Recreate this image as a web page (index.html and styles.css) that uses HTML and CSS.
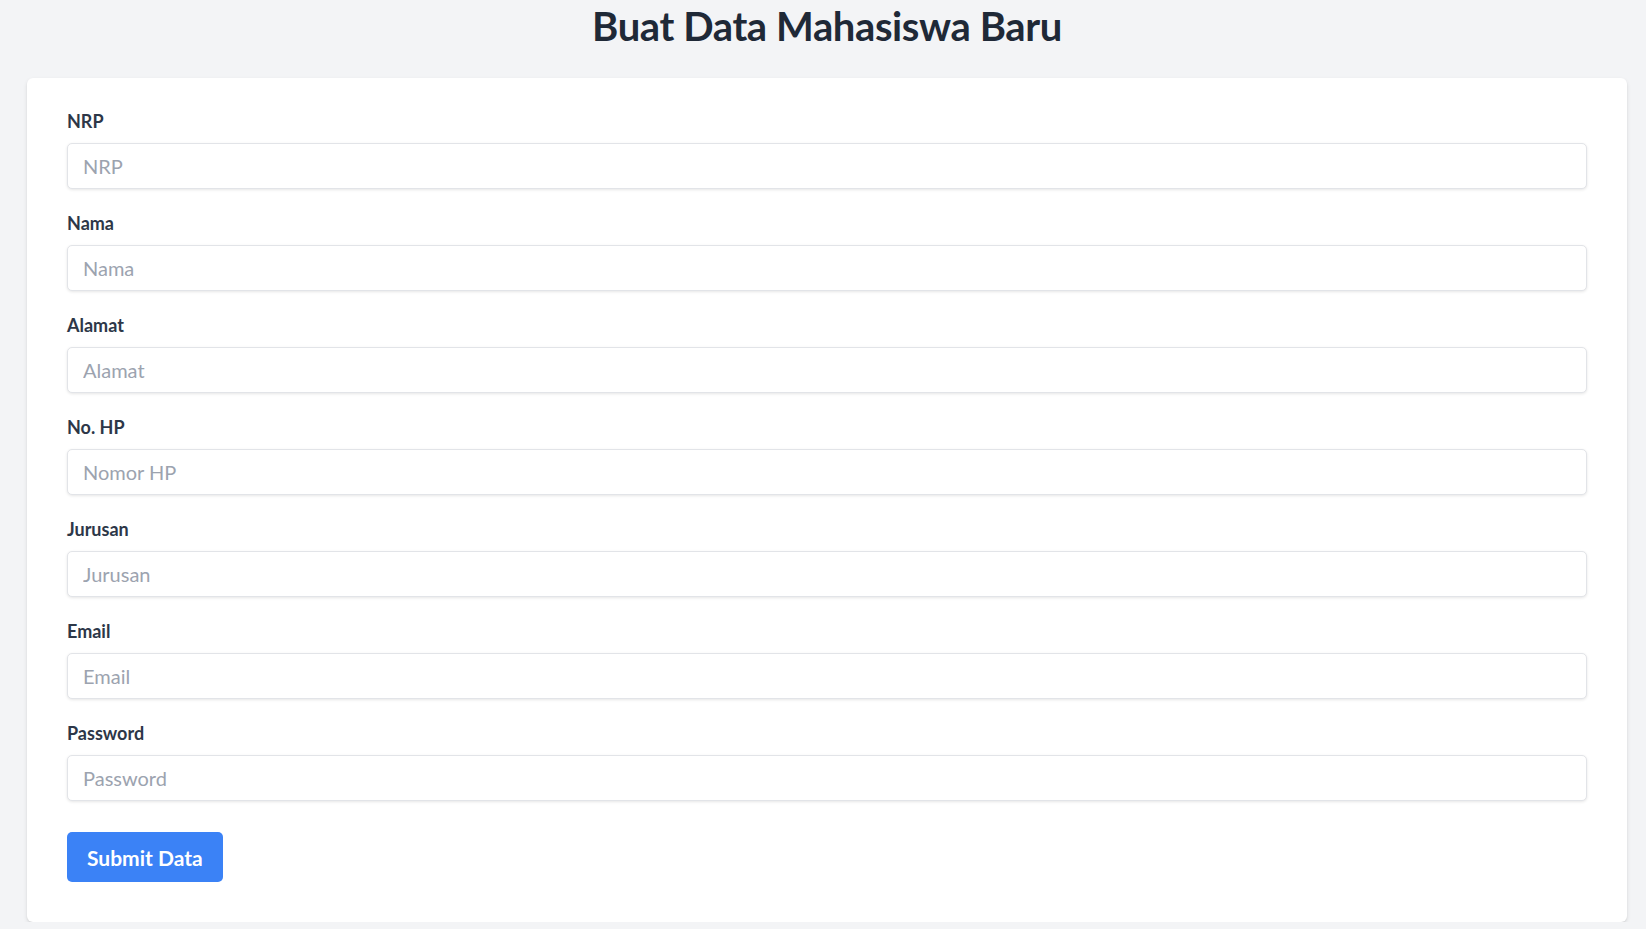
FILE: index.html
```html
<!DOCTYPE html>
<html lang="id">
<head>
<meta charset="utf-8">
<title>Buat Data Mahasiswa Baru</title>
<link rel="stylesheet" href="styles.css">
</head>
<body>
<main class="page">
  <h1 class="title">Buat Data Mahasiswa Baru</h1>
  <form class="card">
    <div class="field">
      <label class="label" for="nrp">NRP</label>
      <input class="input" id="nrp" type="text" placeholder="NRP">
    </div>
    <div class="field">
      <label class="label" for="nama">Nama</label>
      <input class="input" id="nama" type="text" placeholder="Nama">
    </div>
    <div class="field">
      <label class="label" for="alamat">Alamat</label>
      <input class="input" id="alamat" type="text" placeholder="Alamat">
    </div>
    <div class="field">
      <label class="label" for="hp">No. HP</label>
      <input class="input" id="hp" type="text" placeholder="Nomor HP">
    </div>
    <div class="field">
      <label class="label" for="jurusan">Jurusan</label>
      <input class="input" id="jurusan" type="text" placeholder="Jurusan">
    </div>
    <div class="field">
      <label class="label" for="email">Email</label>
      <input class="input" id="email" type="email" placeholder="Email">
    </div>
    <div class="field">
      <label class="label" for="password">Password</label>
      <input class="input" id="password" type="password" placeholder="Password">
    </div>
    <div class="actions">
      <button class="button" type="submit">Submit Data</button>
    </div>
  </form>
</main>
</body>
</html>
```

FILE: styles.css
```css
* {
  box-sizing: border-box;
}

html, body {
  margin: 0;
  padding: 0;
}

body {
  background: #f3f4f6;
  font-family: Lato, "Noto Sans", sans-serif;
  color: #1f2937;
}

.page {
  width: 1600px;
  margin-left: 27px;
  padding-top: 2px;
}

.title {
  margin: 0;
  font-size: 40px;
  line-height: 48px;
  font-weight: 700;
  letter-spacing: -0.4px;
  text-align: center;
  color: #1f2937;
}

.card {
  margin-top: 28px;
  background: #ffffff;
  border-radius: 6px;
  box-shadow: 0 2px 4px rgba(0, 0, 0, 0.1), 0 1px 2px rgba(0, 0, 0, 0.06);
  padding: 30px 40px 40px 40px;
  display: flex;
  flex-direction: column;
  gap: 21px;
}

.field {
  display: flex;
  flex-direction: column;
  gap: 8px;
}

.label {
  font-size: 18px;
  line-height: 27px;
  font-weight: 700;
  color: #2d3748;
}

.input {
  display: block;
  width: 100%;
  height: 46px;
  margin: 0;
  padding: 0 15px;
  border: 1px solid #e2e4e8;
  border-radius: 5px;
  box-shadow: 0 1px 3px rgba(0, 0, 0, 0.1);
  background: #ffffff;
  font-family: inherit;
  font-size: 20px;
  color: #374151;
  outline: none;
}

.input::placeholder {
  color: #9ca3af;
  opacity: 1;
}

.actions {
  padding-top: 10px;
}

.button {
  display: block;
  height: 50px;
  padding: 0 20px;
  border: none;
  border-radius: 5px;
  background: #3b82f6;
  color: #ffffff;
  font-family: inherit;
  font-size: 21px;
  font-weight: 700;
  cursor: pointer;
}
```
